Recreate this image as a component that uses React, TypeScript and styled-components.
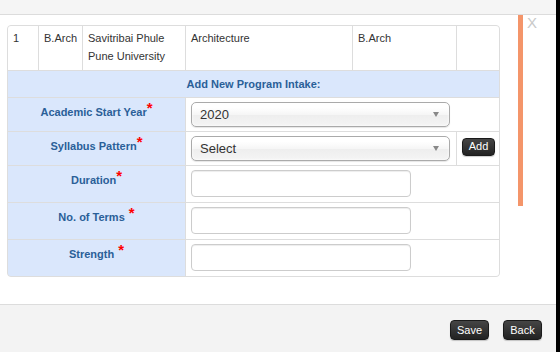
import { Fragment } from 'react';
import styled, { createGlobalStyle } from 'styled-components';

const GlobalStyle = createGlobalStyle`
	html, body {
		margin: 0;
		padding: 0;
		background: #000;
		font-family: 'Liberation Sans', Arial, sans-serif;
	}
`;

const Modal = styled.div`
	width: 556px;
	height: 352px;
	display: flex;
	flex-direction: column;
	background: #fff;
	overflow: hidden;
`;

const ModalHeader = styled.div`
	height: 14px;
	background: #f5f5f5;
	border-bottom: 1px solid #dcdcdc;
	flex-shrink: 0;
`;

const ModalBody = styled.div`
	position: relative;
	flex: 1;
	padding: 10px 7px 0;
`;

/* barra di scorrimento arancione sopra il contenuto */
const ScrollThumb = styled.div`
	position: absolute;
	left: 518px;
	top: 0;
	width: 5px;
	height: 191px;
	background: #f4956a;
`;

const CloseX = styled.span`
	position: absolute;
	left: 527px;
	top: 0;
	font-size: 15px;
	line-height: 16px;
	color: #c9c9c9;
`;

const Grid = styled.div`
	width: 493px;
	box-sizing: border-box;
	display: grid;
	grid-template-columns: 30px 43px 102px 166px 103px 42px;
	grid-template-rows: 44px 26px 33px 33px 36px 36px 36px;
	gap: 1px;
	background: #dddddd;
	border: 1px solid #dddddd;
	border-radius: 4px;
	overflow: hidden;
	font-size: 11px;
	line-height: 18px;
	color: #333;
`;

const Cell = styled.div`
	background: #fff;
	padding: 3px 5px;
`;

const SectionTitle = styled.div`
	grid-column: span 6;
	background: #dae7fc;
	color: #2a5f98;
	font-weight: bold;
	text-align: center;
	padding-top: 4px;
`;

const LabelCell = styled.div`
	grid-column: span 3;
	background: #dae7fc;
	color: #2a5f98;
	font-weight: bold;
	text-align: center;
	padding-top: 5px;
`;

const Required = styled.span<{ $gap?: boolean }>`
	color: #f00;
	font-size: 15px;
	line-height: 0;
	position: relative;
	top: -3px;
	margin-left: ${(p) => (p.$gap ? '4px' : '0')};
`;

const FieldCell = styled.div<{ $span: number }>`
	grid-column: span ${(p) => p.$span};
	background: #fff;
	padding: 4px 0 0 5px;
`;

const SelectBox = styled.div`
	position: relative;
	width: 259px;
	height: 25px;
	box-sizing: border-box;
	border: 1px solid #aaa;
	border-radius: 5px;
	background: linear-gradient(#fff 20%, #f6f6f6 50%, #eee 52%, #f4f4f4 100%);
	box-shadow: inset 0 0 3px #fff, 0 1px 1px rgba(0, 0, 0, 0.1);
	font-size: 13px;
	line-height: 23px;
	padding-left: 8px;
	color: #333;

	&::after {
		content: '';
		position: absolute;
		right: 10px;
		top: 9px;
		border-left: 3.5px solid transparent;
		border-right: 3.5px solid transparent;
		border-top: 5px solid #888;
	}
`;

const TextInput = styled.div`
	width: 220px;
	height: 27px;
	box-sizing: border-box;
	border: 1px solid #ccc;
	border-radius: 4px;
	background: #fff;
	box-shadow: inset 0 1px 1px rgba(0, 0, 0, 0.075);
`;

const DarkButton = styled.button<{ $w: number; $h: number }>`
	width: ${(p) => p.$w}px;
	height: ${(p) => p.$h}px;
	padding: 0;
	border: 1px solid #1a1a1a;
	border-radius: 4px;
	background: linear-gradient(#454545, #222);
	color: #fff;
	font-family: 'Liberation Sans', Arial, sans-serif;
	font-size: 11px;
	line-height: 1;
	box-shadow: 0 1px 1px rgba(0, 0, 0, 0.2);
`;

const AddCell = styled.div`
	background: #fff;
	padding: 5px 0 0 5px;
`;

const ModalFooter = styled.div`
	height: 48px;
	box-sizing: border-box;
	flex-shrink: 0;
	background: #f3f3f3;
	border-top: 1px solid #dcdcdc;
	display: flex;
	justify-content: flex-end;
	align-items: flex-start;
	gap: 14px;
	padding: 15px 14px 0 0;
`;

const fields = [
	{ label: 'Duration', gap: false },
	{ label: 'No. of Terms', gap: true },
	{ label: 'Strength', gap: true },
];

export default function App() {
	return (
		<>
			<GlobalStyle />
			<Modal>
				<ModalHeader />
				<ModalBody>
					<Grid>
						<Cell>1</Cell>
						<Cell>B.Arch</Cell>
						<Cell>
							Savitribai Phule
							<br />
							Pune University
						</Cell>
						<Cell>Architecture</Cell>
						<Cell>B.Arch</Cell>
						<Cell />

						<SectionTitle>Add New Program Intake:</SectionTitle>

						<LabelCell>
							Academic Start Year<Required>*</Required>
						</LabelCell>
						<FieldCell $span={3}>
							<SelectBox>2020</SelectBox>
						</FieldCell>

						<LabelCell>
							Syllabus Pattern<Required>*</Required>
						</LabelCell>
						<FieldCell $span={2}>
							<SelectBox>Select</SelectBox>
						</FieldCell>
						<AddCell>
							<DarkButton $w={33} $h={18}>Add</DarkButton>
						</AddCell>

						{fields.map((f) => (
							<Fragment key={f.label}>
								<LabelCell>
									{f.label}
									<Required $gap={f.gap}>*</Required>
								</LabelCell>
								<FieldCell $span={3}>
									<TextInput />
								</FieldCell>
							</Fragment>
						))}
					</Grid>
					<ScrollThumb />
					<CloseX>X</CloseX>
				</ModalBody>
				<ModalFooter>
					<DarkButton $w={39} $h={20}>Save</DarkButton>
					<DarkButton $w={39} $h={20}>Back</DarkButton>
				</ModalFooter>
			</Modal>
		</>
	);
}
